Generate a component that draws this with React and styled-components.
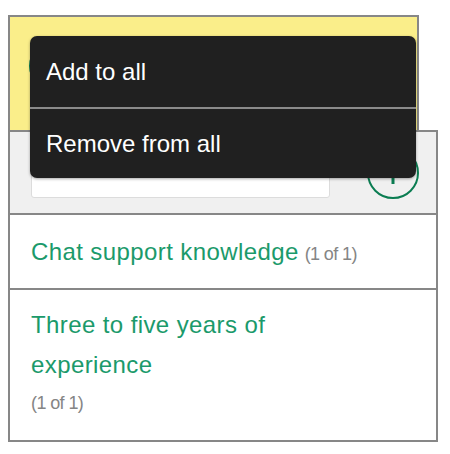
import React from "react";
import styled, { createGlobalStyle } from "styled-components";

const Global = createGlobalStyle`
  html, body { margin: 0; padding: 0; background: #ffffff; }
  body { font-family: "Liberation Sans", Arial, sans-serif; }
  * { box-sizing: border-box; }
`;

const Page = styled.div`
  padding: 15px 0 0 8px;
  width: 450px;
`;

const Banner = styled.div`
  position: relative;
  width: 411px;
  height: 115px;
  background: #faee8a;
  border: 2px solid #878787;
  border-bottom: none;
  padding: 24px 0 0 19px;
`;

const GhostButton = styled.div`
  width: 220px;
  height: 50px;
  border: 2px solid #0b7d52;
  border-radius: 26px;
`;

const Menu = styled.div`
  position: absolute;
  left: 20px;
  top: 19px;
  width: 386px;
  background: #202020;
  border-radius: 7px;
  box-shadow: 0 1px 3px rgba(0, 0, 0, 0.35);
  overflow: hidden;
  z-index: 5;
`;

const MenuItem = styled.div`
  height: ${(p) => p.$h}px;
  display: flex;
  align-items: center;
  padding-left: 16px;
  color: #ffffff;
  font-size: 24px;
  border-top: ${(p) => (p.$divider ? "2px solid #8a8a8a" : "none")};
`;

const Panel = styled.div`
  width: 430px;
  border: 2px solid #878787;
`;

const Header = styled.div`
  height: 83px;
  background: #f0f0f0;
  border-bottom: 2px solid #878787;
  display: flex;
  align-items: center;
  justify-content: space-between;
  padding: 0 17px 0 21px;
`;

const SearchInput = styled.div`
  width: 299px;
  height: 44px;
  margin-top: 7px;
  background: #ffffff;
  border: 1px solid #dcdcdc;
  border-radius: 3px;
`;

const AddButton = styled.div`
  width: 52px;
  height: 52px;
  border-radius: 50%;
  border: 2.5px solid #0b7d52;
  display: flex;
  align-items: center;
  justify-content: center;
  background: transparent;
`;

const Row = styled.div`
  padding: ${(p) => p.$pad};
  border-bottom: ${(p) => (p.$last ? "none" : "2px solid #878787")};
`;

const Title = styled.span`
  color: #1b9a6b;
  font-size: 24px;
  line-height: 40px;
  letter-spacing: 0.4px;
`;

const TitleBlock = styled.div`
  max-width: 280px;
  color: #1b9a6b;
  font-size: 24px;
  line-height: 40px;
  letter-spacing: 0.4px;
`;

const Count = styled.span`
  color: #858585;
  font-size: 18px;
  letter-spacing: -0.6px;
  margin-left: 6px;
`;

const CountBlock = styled.div`
  color: #858585;
  font-size: 18px;
  line-height: 20px;
  letter-spacing: -0.6px;
  margin-top: 8px;
`;

export default function App() {
  return (
    <>
      <Global />
      <Page>
        <Banner>
          <GhostButton />
          <Menu>
            <MenuItem $h={71}>Add to all</MenuItem>
            <MenuItem $h={71} $divider>Remove from all</MenuItem>
          </Menu>
        </Banner>
        <Panel>
          <Header>
            <SearchInput />
            <AddButton>
              <svg width="24" height="24" viewBox="0 0 24 24">
                <path d="M12 1v22M1 12h22" stroke="#0b7d52" strokeWidth="3" fill="none" />
              </svg>
            </AddButton>
          </Header>
          <Row $pad="17px 21px 16px">
            <Title>Chat support knowledge</Title>
            <Count>(1 of 1)</Count>
          </Row>
          <Row $pad="15px 21px 27px" $last>
            <TitleBlock>Three to five years of experience</TitleBlock>
            <CountBlock>(1 of 1)</CountBlock>
          </Row>
        </Panel>
      </Page>
    </>
  );
}
